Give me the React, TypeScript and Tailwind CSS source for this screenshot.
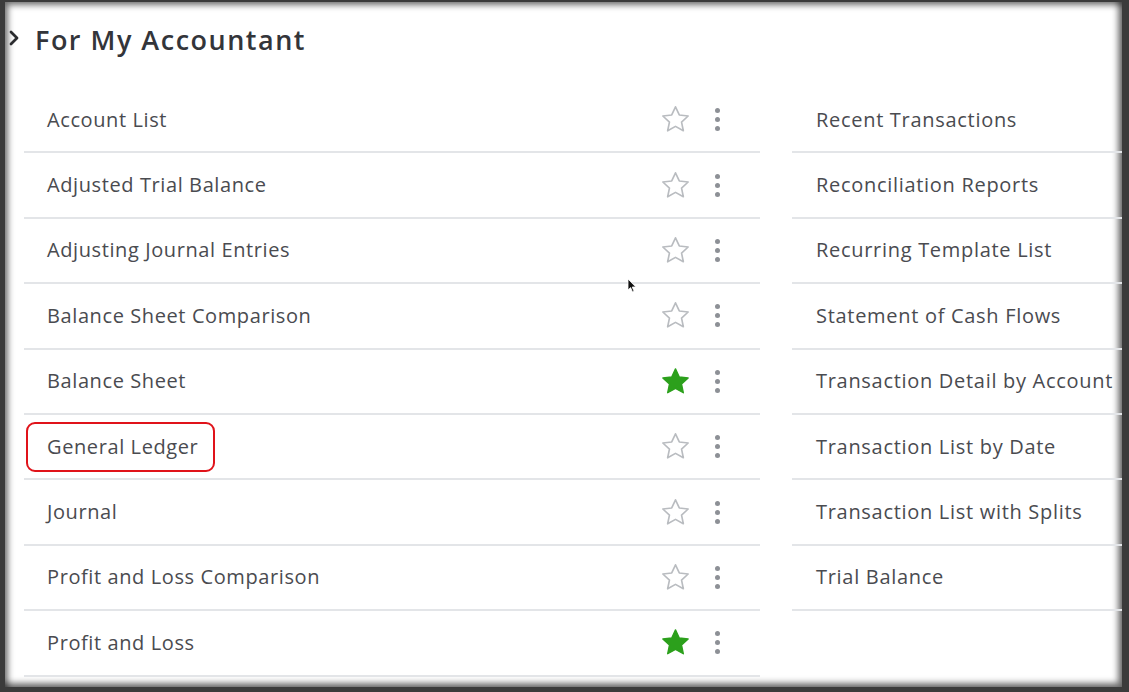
import { useState } from "react";

type Report = { name: string; fav?: boolean; marked?: boolean };

const leftReports: Report[] = [
  { name: "Account List" },
  { name: "Adjusted Trial Balance" },
  { name: "Adjusting Journal Entries" },
  { name: "Balance Sheet Comparison" },
  { name: "Balance Sheet", fav: true },
  { name: "General Ledger", marked: true },
  { name: "Journal" },
  { name: "Profit and Loss Comparison" },
  { name: "Profit and Loss", fav: true },
];

const rightReports = [
  "Recent Transactions",
  "Reconciliation Reports",
  "Recurring Template List",
  "Statement of Cash Flows",
  "Transaction Detail by Account",
  "Transaction List by Date",
  "Transaction List with Splits",
  "Trial Balance",
];

function Star({ filled }: { filled?: boolean }) {
  return (
    <svg width="33" height="33" viewBox="0 0 24 24" className="shrink-0">
      <path
        d="M12 2.8l2.75 5.9 6.45.75-4.8 4.4 1.3 6.35L12 17l-5.7 3.2 1.3-6.35-4.8-4.4 6.45-.75z"
        fill={filled ? "#2ca01c" : "none"}
        stroke={filled ? "#2ca01c" : "#b9bcc0"}
        strokeWidth={filled ? 1 : 1.2}
        strokeLinejoin="round"
      />
    </svg>
  );
}

function Dots() {
  return (
    <div className="flex w-[6px] flex-col items-center gap-[4px]">
      <span className="h-[5px] w-[5px] rounded-full bg-[#8d9096]" />
      <span className="h-[5px] w-[5px] rounded-full bg-[#8d9096]" />
      <span className="h-[5px] w-[5px] rounded-full bg-[#8d9096]" />
    </div>
  );
}

function Cursor() {
  return (
    <svg width="10" height="15" viewBox="0 0 10 15" className="absolute left-[622px] top-[276px]">
      <path d="M1 1v11l2.6-2.4 1.9 4.3 1.6-.7-1.9-4.2H8.8z" fill="#111" stroke="#fff" strokeWidth="0.8" />
    </svg>
  );
}

export default function App() {
  const [reports] = useState(leftReports);

  return (
    <div
      className="relative h-[692px] w-[1129px] overflow-hidden border-b-[5px] border-l-[5px] border-r-[7px] border-t-[2px] border-[#3b3b3b] bg-white shadow-[inset_3px_3px_6px_rgba(0,0,0,0.55),inset_-4px_-4px_6px_rgba(0,0,0,0.55)]"
      style={{ fontFamily: "'Open Sans', Lato, sans-serif" }}
    >
      <div className="flex h-[86px] items-start pl-[2px] pt-[22px]">
        <svg width="14" height="20" viewBox="0 0 14 20" className="mt-[4px]">
          <path d="M4 4l6 6-6 6" fill="none" stroke="#2b2c2f" strokeWidth="2.8" strokeLinecap="round" strokeLinejoin="round" />
        </svg>
        <h1 className="ml-[14px] text-[27px] font-semibold leading-[32px] tracking-[1.5px] text-[#33353a]">For My Accountant</h1>
      </div>

      <div className="flex gap-[32px] pl-[19px]">
        <div className="w-[736px] shrink-0">
          {reports.map((r) => (
            <div key={r.name} className="flex h-[65.4px] items-center border-b-2 border-[#e3e5e8]">
              <div className="flex-1 pl-[2px]">
                <span
                  className={
                    r.marked
                      ? "inline-flex h-[50px] items-center rounded-[9px] border-2 border-[#e0131a] pl-[19px] pr-[15px] text-[20px] tracking-[0.6px] text-[#4a4b50]"
                      : "inline-flex px-[21px] text-[20px] tracking-[0.6px] text-[#4a4b50]"
                  }
                >
                  {r.name}
                </span>
              </div>
              <div className="flex items-center gap-[22px] pr-[40px]">
                <Star filled={r.fav} />
                <Dots />
              </div>
            </div>
          ))}
        </div>
        <div className="w-[360px] shrink-0">
          {rightReports.map((name) => (
            <div key={name} className="flex h-[65.4px] items-center border-b-2 border-[#e3e5e8] pl-[24px]">
              <span className="whitespace-nowrap text-[20px] tracking-[0.7px] text-[#4a4b50]">{name}</span>
            </div>
          ))}
        </div>
      </div>
      <Cursor />
    </div>
  );
}
